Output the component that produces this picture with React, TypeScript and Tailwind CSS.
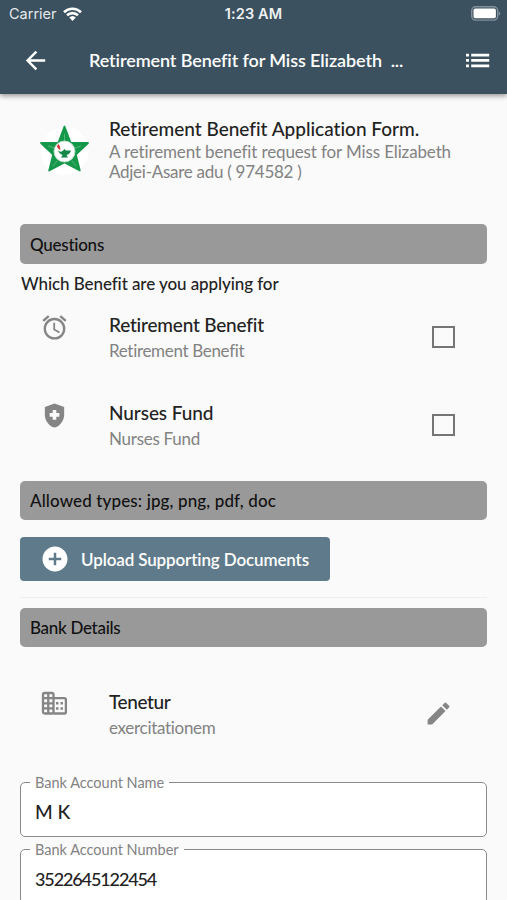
import type { ReactNode } from "react";
import {
  MdAccessAlarm,
  MdAddCircle,
  MdArrowBack,
  MdEdit,
  MdHealthAndSafety,
} from "react-icons/md";

const BENEFITS = [
  {
    key: "retirement",
    title: "Retirement Benefit",
    icon: <MdAccessAlarm size={29} />,
    titleClass: "tracking-[-0.2px]",
    subClass: "tracking-[-0.32px]",
  },
  {
    key: "nurses",
    title: "Nurses Fund",
    icon: <MdHealthAndSafety size={29} />,
    titleClass: "tracking-[-0.07px]",
    subClass: "tracking-[-0.27px]",
  },
];

export default function App() {
  return (
    <div className="flex h-[900px] w-[507px] flex-col overflow-hidden bg-[#fafafa] font-['Lato','Liberation_Sans',sans-serif] text-[#222] [font-variant-ligatures:none]">
      <header className="z-10 h-[94px] shrink-0 bg-[#3c515f] text-white shadow-[0_2px_5px_rgba(0,0,0,0.4)]">
        <StatusBar />
        <div className="flex h-16 items-center pl-[21px] pr-[17px]">
          <MdArrowBack size={29} />
          <h1 className="ml-[39px] flex-1 whitespace-pre text-[18px] font-semibold tracking-[-0.1px]">
            {"Retirement Benefit for Miss Elizabeth  ..."}
          </h1>
          <ListIcon />
        </div>
      </header>

      <main className="flex flex-col px-5">
        <section className="flex h-[130.3px] pt-[22px]">
          <div className="w-[89px] pl-5 pt-[9px]">
            <StarLogo />
          </div>
          <div>
            <h2 className="whitespace-nowrap text-[19px] font-medium leading-[25px]">
              Retirement Benefit Application Form.
            </h2>
            <p className="mt-px whitespace-nowrap text-[17px] leading-[19.5px] tracking-[-0.13px] text-[#828282]">
              A retirement benefit request for Miss Elizabeth
              <br />
              <span className="tracking-[-0.27px]">Adjei-Asare adu ( 974582 )</span>
            </p>
          </div>
        </section>

        <SectionBar className="tracking-[-0.25px]">Questions</SectionBar>
        <p className="mt-[8.3px] h-6 pl-px text-[17px] font-medium leading-6 tracking-[-0.08px]">
          Which Benefit are you applying for
        </p>
        {BENEFITS.map((benefit) => (
          <div key={benefit.key} className="flex h-[88px] pt-[16px]">
            <div className="w-[89px] pl-5 pt-px text-[#858585]">{benefit.icon}</div>
            <div className="flex-1">
              <h3 className={`text-[19px] font-medium leading-[26px] ${benefit.titleClass}`}>
                {benefit.title}
              </h3>
              <p className={`text-[17px] leading-[26px] text-[#828282] ${benefit.subClass}`}>
                {benefit.title}
              </p>
            </div>
            <span className="mr-[32.5px] mt-[14px] size-[22.5px] border-[2.5px] border-[#757575]" />
          </div>
        ))}

        <SectionBar className="mt-[9px] tracking-[0.12px]">
          Allowed types: jpg, png, pdf, doc
        </SectionBar>
        <button className="mt-[17px] flex h-[44px] w-[310px] items-center rounded-[4px] bg-[#5f7b8b] pl-5 text-white">
          <MdAddCircle size={30} />
          <span className="ml-[11px] whitespace-nowrap text-[17px] font-semibold tracking-[-0.13px]">
            Upload Supporting Documents
          </span>
        </button>
        <hr className="mt-[16px] mb-[9.6px] border-[#eeeeee]" />
        <SectionBar className="tracking-[-0.3px]">Bank Details</SectionBar>

        <div className="flex h-[128.6px] pt-[42px]">
          <div className="w-[89px] pl-5 text-[#858585]">
            <BusinessIcon />
          </div>
          <div className="flex-1">
            <h3 className="text-[19px] font-medium leading-[26px] tracking-[-0.4px]">Tenetur</h3>
            <p className="text-[17px] leading-[26px] tracking-[-0.3px] text-[#828282]">
              exercitationem
            </p>
          </div>
          <MdEdit size={29} className="mr-[34px] mt-[10px] text-[#858585]" />
        </div>

        <Field label="Bank Account Name" value="M K" valueClass="text-[19px]" />
        <Field
          label="Bank Account Number"
          value="3522645122454"
          valueClass="text-[18px] tracking-[-1.12px]"
        />
      </main>
    </div>
  );
}

function SectionBar({ children, className = "" }: { children: ReactNode; className?: string }) {
  return (
    <div
      className={`flex h-[39.4px] shrink-0 items-center rounded-[5px] bg-[#999] pl-[10px] pt-px text-[17px] font-medium text-[#111] ${className}`}
    >
      {children}
    </div>
  );
}

function Field({ label, value, valueClass }: { label: string; value: string; valueClass: string }) {
  return (
    <fieldset className="mb-[6px] h-[61px] w-[467px] rounded-[5px] border-[1.5px] border-[#8a8a8a] bg-white pl-[9px]">
      <legend className="h-[14px] px-[5px] text-[14.5px] leading-[13px] text-[#828282]">
        {label}
      </legend>
      <div className={`pl-[5px] pt-[10px] font-medium leading-6 ${valueClass}`}>{value}</div>
    </fieldset>
  );
}

function StatusBar() {
  return (
    <div className="grid h-7 grid-cols-3 items-center pl-[9px] pr-[6px] font-['Inter',sans-serif]">
      <div className="flex items-center gap-[6px] text-[14.5px] text-[#e3e8eb]">
        Carrier
        <svg width="19" height="14" viewBox="0 0 19 14" fill="none" stroke="white" strokeWidth="2.6">
          <path d="M1 5.2a12.2 12.2 0 0 1 17 0M4 8.3a8 8 0 0 1 11 0" />
          <path d="M6.2 10.6a4.8 4.8 0 0 1 6.6 0L9.5 14z" fill="white" stroke="none" />
        </svg>
      </div>
      <div className="mr-[3px] whitespace-nowrap text-center text-[14.5px] font-semibold tracking-[0.1px] text-[#edf1f3]">
        1:23 AM
      </div>
      <svg className="-mt-px justify-self-end" width="30" height="15" viewBox="0 0 30 15">
        <rect x="0.7" y="0.7" width="26" height="13.4" rx="4" fill="none" stroke="#82919b" strokeWidth="1.4" />
        <rect x="2.5" y="2.5" width="22.4" height="9.8" rx="1.8" fill="white" />
        <path d="M27.8 5.2c2 .8 2 3.6 0 4.4z" fill="#82919b" />
      </svg>
    </div>
  );
}

function ListIcon() {
  return (
    <svg width="24" height="15" viewBox="0 0 24 15" fill="white">
      <path d="M0 .7h3v2.7H0zM0 6.1h3v2.7H0zM0 11.5h3v2.7H0zM5.2 .7h18v2.7h-18zM5.2 6.1h18v2.7h-18zM5.2 11.5h18v2.7h-18z" />
    </svg>
  );
}

function StarLogo() {
  return (
    <svg width="50" height="50" viewBox="0 0 50 50">
      <circle cx="24.5" cy="26" r="24" fill="white" />
      <path
        d="M24.5 1.5L30.7 18H48L35.8 29.5 39.8 45.500 24.5 37.5 9.2 45.500 13.2 29.5 1 18h17.3z"
        fill="#16984b"
        stroke="#16984b"
        strokeWidth="1.8"
        strokeLinejoin="round"
      />
      <path d="M24.5 9v7M41 21l-6 2M36 41l-4-5M13 41l4-5M8 21l6 2" stroke="#5db581" strokeWidth="0.9" />
      <circle cx="24.5" cy="26.5" r="10.5" fill="white" stroke="#b9dcc7" />
      <path d="M18 25.5c3 2 4 1 5 0l1.5-1.5 1.5 1.5h5c-1 3-2.5 4-4.5 4.5l1.5 2.5h-7l1.5-2.5c-2-.7-3.5-2-4.5-4.5z" fill="#16874a" />
      <path d="M18.5 19.5c-2 2-1 3.5 1.5 5-.2-1.5 0-3-1.5-5z" fill="#e02b2b" stroke="#e02b2b" strokeWidth=".7" />
    </svg>
  );
}

function BusinessIcon() {
  return (
    <svg width="29" height="29" viewBox="0 0 29 29" fill="none" stroke="currentColor" strokeWidth="2.3">
      <rect x="3" y="4" width="10.5" height="20.5" rx="1.5" />
      <path d="M8.25 4v20.5M3 9.2h10.5M3 14.3h10.5M3 19.4h10.5M13.5 9.2h10.8q1.6 0 1.6 1.6v12.1q0 1.6-1.6 1.6H13.5" />
      <path strokeWidth="2.5" d="M16 14.3h2.5M16 19.4h2.5M20.5 14.3h2.5M20.5 19.4h2.5" />
    </svg>
  );
}
